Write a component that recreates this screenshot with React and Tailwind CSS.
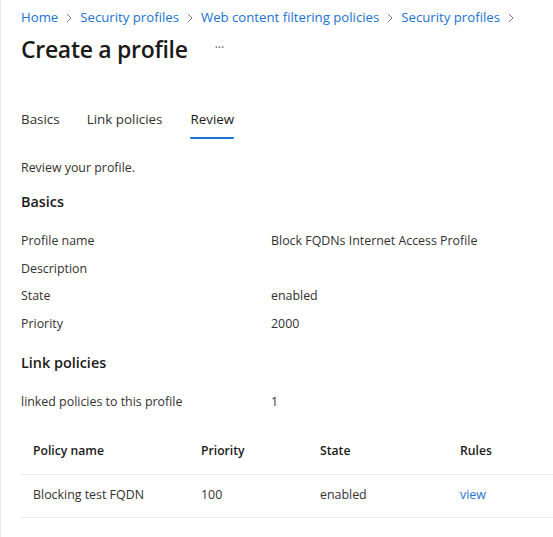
import React from "react";

const crumbs = ["Home", "Security profiles", "Web content filtering policies", "Security profiles"];

const basics = [
  { label: "Profile name", value: "Block FQDNs Internet Access Profile" },
  { label: "Description", value: "" },
  { label: "State", value: "enabled" },
  { label: "Priority", value: "2000" },
];

const Chevron = () => (
  <svg width="8" height="10" viewBox="0 0 8 10" className="mx-[7px]">
    <path d="M2 1l4 4-4 4" fill="none" stroke="#7a7a7a" strokeWidth="1" />
  </svg>
);

const Row = ({ label, value }) => (
  <div className="flex h-[27.4px] items-center">
    <div className="w-[250px]">{label}</div>
    <div>{value}</div>
  </div>
);

export default function App() {
  return (
    <div
      className="w-[553px] h-[537px] overflow-hidden bg-white text-[12.4px] text-[#323130] border-l border-[#ebebeb]"
      style={{ fontFamily: '"Segoe UI", "Open Sans", "Noto Sans", sans-serif' }}
    >
      <div className="pl-[20px]">
        {/* breadcrumb */}
        <div className="flex items-center h-[20px] mt-[8px] text-[13.2px] text-[#1a73d1]">
          {crumbs.map((c, i) => (
            <React.Fragment key={i}>
              <span>{c}</span>
              <Chevron />
            </React.Fragment>
          ))}
        </div>

        {/* title */}
        <div className="flex items-center h-[34px] mt-[4px]">
          <h1 className="text-[23px] font-semibold text-[#1b1a19] tracking-[-0.3px]">Create a profile</h1>
          <span className="ml-[27px] text-[12px] text-[#555] mt-[-2px]">···</span>
        </div>

        {/* tabs */}
        <div className="flex mt-[37px] text-[13.4px] h-[34px]">
          <div className="mr-[27px] pt-[6px] text-[#323130]">Basics</div>
          <div className="mr-[28px] pt-[6px] text-[#323130]">Link policies</div>
          <div className="relative pt-[6px] text-[#1b1a19]">
            Review
            <div className="absolute left-0 right-0 bottom-[-2px] h-[2px] bg-[#1a73d1] rounded" />
          </div>
        </div>

        <div className="mt-[21px] h-[20px] flex items-center">Review your profile.</div>

        <div className="mt-[13px] h-[22px] flex items-center text-[14.4px] font-semibold text-[#1b1a19]">Basics</div>

        <div className="mt-[15px]">
          {basics.map((r) => (
            <Row key={r.label} {...r} />
          ))}
        </div>

        <div className="mt-[14px] h-[22px] flex items-center text-[14.4px] font-semibold text-[#1b1a19]">Link policies</div>

        <div className="mt-[19px] flex h-[20px] items-center">
          <div className="w-[250px]">linked policies to this profile</div>
          <div>1</div>
        </div>

        {/* table */}
        <div className="mt-[17px]">
          <div className="flex items-center h-[45px] border-b border-[#edebe9] font-semibold text-[12.2px] text-[#1b1a19] pl-[12px]">
            <div className="w-[168px]">Policy name</div>
            <div className="w-[119px]">Priority</div>
            <div className="w-[140px]">State</div>
            <div>Rules</div>
          </div>
          <div className="flex items-center h-[43px] border-b border-[#edebe9] pl-[12px]">
            <div className="w-[168px]">Blocking test FQDN</div>
            <div className="w-[119px]">100</div>
            <div className="w-[140px]">enabled</div>
            <div className="text-[#1a73d1]">view</div>
          </div>
        </div>
      </div>
    </div>
  );
}
